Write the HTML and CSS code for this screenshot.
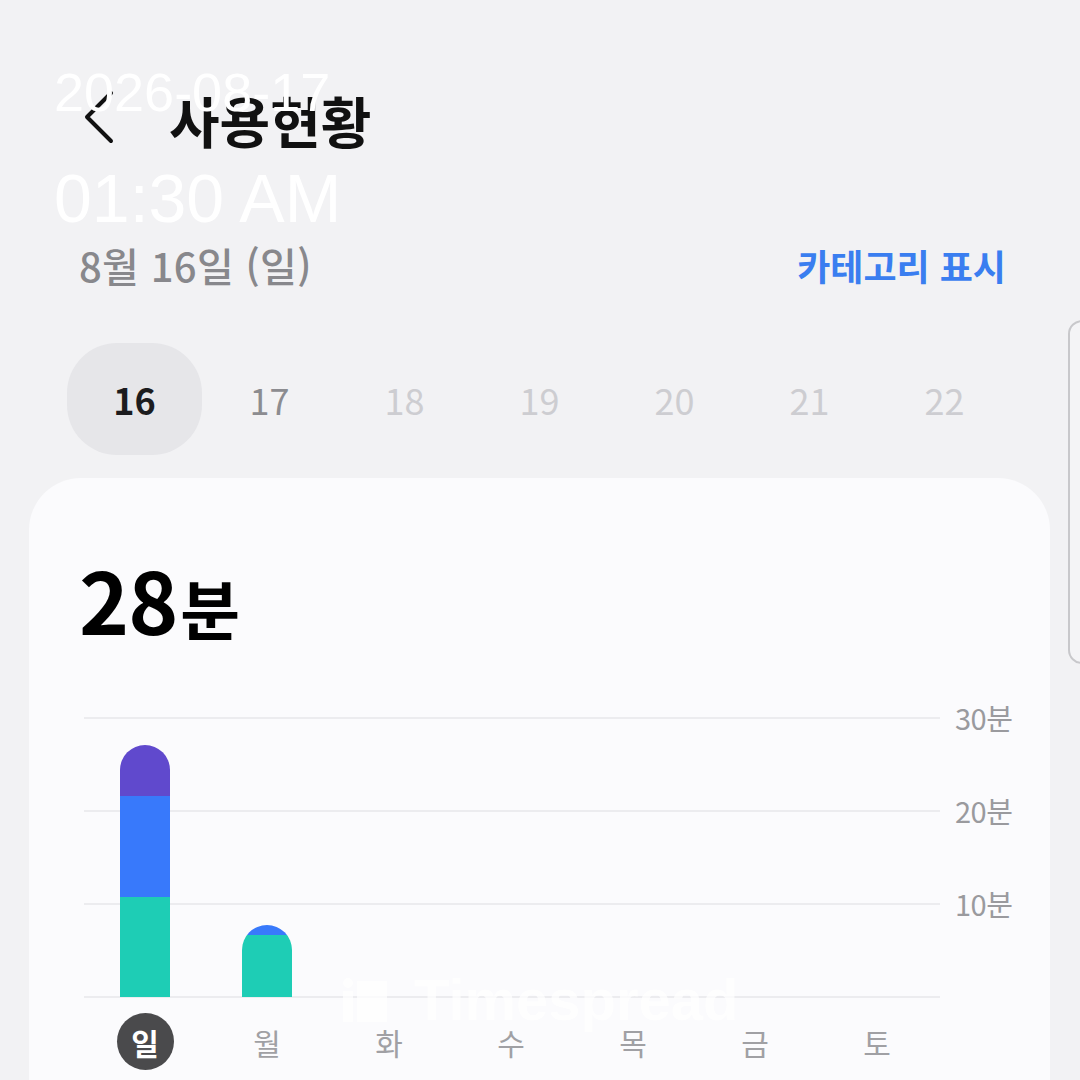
FILE: index.html
```html
<!DOCTYPE html>
<html lang="ko">
<head>
<meta charset="utf-8">
<link rel="stylesheet" href="styles.css">
</head>
<body>
<div class="screen">
  <div class="topbar">
    <svg class="back" viewBox="0 0 30 54" width="30" height="54"><path d="M27 3 L3 27 L27 51" fill="none" stroke="#111" stroke-width="4" stroke-linecap="round" stroke-linejoin="round"/></svg>
    <h1 class="title">사용현황</h1>
  </div>
  <div class="daterow">
    <span class="date">8월 16일 (일)</span>
    <span class="cat">카테고리 표시</span>
  </div>
  <div class="days">
    <div class="day sel">16</div>
    <div class="day next">17</div>
    <div class="day">18</div>
    <div class="day">19</div>
    <div class="day">20</div>
    <div class="day">21</div>
    <div class="day">22</div>
  </div>
  <div class="card">
    <div class="total"><span class="num">28</span><span class="unit">분</span></div>
    <div class="chart">
      <div class="plot">
        <div class="grow"><div class="line"></div><span class="ylabel">30분</span></div>
        <div class="grow"><div class="line"></div><span class="ylabel">20분</span></div>
        <div class="grow"><div class="line"></div><span class="ylabel">10분</span></div>
        <div class="grow base"><div class="line"></div></div>
        <div class="bars">
          <div class="col"><div class="bar"><div class="seg purple" style="height:51px"></div><div class="seg blue" style="height:101px"></div><div class="seg teal" style="height:100px"></div></div></div>
          <div class="col"><div class="bar"><div class="seg blue" style="height:10px"></div><div class="seg teal" style="height:62px"></div></div></div>
          <div class="col"></div>
          <div class="col"></div>
          <div class="col"></div>
          <div class="col"></div>
          <div class="col"></div>
        </div>
      </div>
      <div class="wdays">
        <div class="wd"><span class="wd-sel">일</span></div>
        <div class="wd">월</div>
        <div class="wd">화</div>
        <div class="wd">수</div>
        <div class="wd">목</div>
        <div class="wd">금</div>
        <div class="wd">토</div>
      </div>
    </div>
  </div>
  <div class="scrollthumb"></div>
  <div class="stamp">
    <div class="stamp-date">2026-08-17</div>
    <div class="stamp-time">01:30 AM</div>
  </div>
  <div class="watermark">
    <svg class="wm-icon" viewBox="0 0 46 46" width="46" height="46"><circle cx="6" cy="6" r="5" fill="#fff"/><rect x="1" y="14" width="10" height="31" fill="#fff"/><rect x="15" y="4" width="30" height="41" fill="#fff"/></svg>
    <span class="wm-text">Timespread</span>
  </div>
</div>
</body>
</html>
```
FILE: styles.css
```css
html, body {
  margin: 0;
  padding: 0;
}
body {
  background: #f2f2f4;
  font-family: "Noto Sans CJK KR", "Noto Sans", sans-serif;
  width: 1080px;
  height: 1080px;
  overflow: hidden;
}
.screen {
  position: relative;
  width: 1080px;
  height: 1080px;
  display: flex;
  flex-direction: column;
}
.topbar {
  margin-top: 79px;
  height: 80px;
  display: flex;
  align-items: center;
  padding-left: 84px;
}
.back {
  display: block;
  margin-top: -4px;
}
.title {
  margin: 0 0 0 55px;
  font-size: 55px;
  font-weight: 700;
  color: #111;
  line-height: 80px;
  letter-spacing: 0;
}
.daterow {
  margin-top: 81px;
  height: 50px;
  display: flex;
  align-items: center;
  justify-content: space-between;
  padding: 0 74px 0 79px;
}
.date {
  font-size: 40px;
  font-weight: 500;
  color: #88888c;
  letter-spacing: 0.3px;
}
.cat {
  font-size: 36px;
  font-weight: 700;
  color: #3a7ef0;
  letter-spacing: 0;
}
.days {
  margin-top: 53px;
  height: 112px;
  padding-left: 67px;
  display: grid;
  grid-template-columns: repeat(7, 135px);
}
.day {
  display: flex;
  align-items: center;
  justify-content: center;
  font-size: 36px;
  color: #cdcdd1;
  font-weight: 400;
  border-radius: 50px;
}
.day.sel {
  background: #e6e6e9;
  color: #1c1c1e;
  font-weight: 700;
}
.day.next {
  color: #8c8c90;
  font-weight: 400;
}
.card {
  margin: 23px 30px 0 29px;
  flex: 1;
  background: #fbfbfd;
  border-radius: 52px 52px 0 0;
  padding-top: 78px;
}
.total {
  padding-left: 50px;
  line-height: 84px;
  height: 84px;
  color: #000;
  font-weight: 700;
}
.num {
  font-size: 85px;
  letter-spacing: -1px;
}
.unit {
  font-size: 65px;
  margin-left: 3px;
}
.chart {
  margin-top: 78px;
  margin-left: 55px;
}
.plot {
  position: relative;
  width: 960px;
}
.grow {
  height: 93px;
  display: flex;
}
.grow.base {
  height: 0;
}
.line {
  flex: none;
  width: 856px;
  border-top: 2px solid #ececef;
  margin-top: -1px;
}
.ylabel {
  flex: none;
  margin-left: 15px;
  margin-top: -18px;
  font-size: 29px;
  line-height: 34px;
  height: 34px;
  color: #9a9a9e;
  white-space: nowrap;
  letter-spacing: -0.5px;
}
.bars {
  position: absolute;
  left: 0;
  top: 0;
  width: 856px;
  height: 279px;
  display: grid;
  grid-template-columns: repeat(7, 122px);
}
.col {
  display: flex;
  align-items: flex-end;
  justify-content: center;
}
.bar {
  width: 50px;
  border-radius: 25px 25px 0 0;
  overflow: hidden;
  display: flex;
  flex-direction: column;
}
.seg.purple { background: #6049cd; }
.seg.blue { background: #3879fb; }
.seg.teal { background: #1ecdb5; }
.wdays {
  margin-top: 16px;
  width: 854px;
  display: grid;
  grid-template-columns: repeat(7, 122px);
  height: 57px;
}
.wd {
  display: flex;
  align-items: center;
  justify-content: center;
  font-size: 30px;
  color: #a0a0a4;
}
.wd-sel {
  width: 57px;
  height: 57px;
  border-radius: 50%;
  background: #4a4a4c;
  color: #fff;
  font-weight: 600;
  display: flex;
  align-items: center;
  justify-content: center;
}
.scrollthumb {
  position: absolute;
  left: 1068px;
  top: 320px;
  width: 30px;
  height: 340px;
  border: 2px solid #c8c8cb;
  border-radius: 14px;
  background: #f4f4f6;
}
.stamp {
  position: absolute;
  left: 54px;
  top: 65px;
  color: #fff;
  font-family: "Liberation Sans", Arial, sans-serif;
}
.stamp-date {
  font-size: 54px;
  line-height: 54px;
}
.stamp-time {
  margin-top: 45px;
  font-size: 68px;
  line-height: 68px;
}
.watermark {
  position: absolute;
  left: 342px;
  top: 970px;
  display: flex;
  align-items: center;
  gap: 26px;
  opacity: 0.75;
}
.wm-text {
  font-family: "Liberation Sans", Arial, sans-serif;
  font-weight: 700;
  font-size: 58px;
  line-height: 60px;
  color: #fff;
  letter-spacing: 0;
}
```
